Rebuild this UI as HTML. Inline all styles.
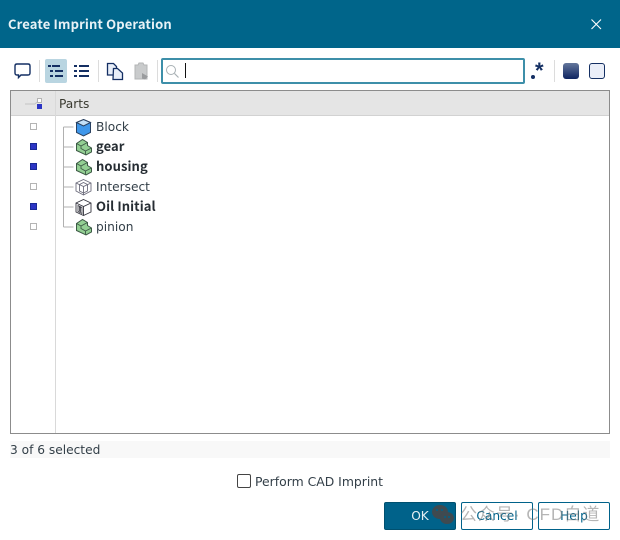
<!DOCTYPE html>
<html>
<head>
<meta charset="utf-8">
<style>
html,body{margin:0;padding:0;width:620px;height:540px;overflow:hidden;background:#fff;font-family:"DejaVu Sans","Liberation Sans",sans-serif;font-size:12.2px;color:#333f48}
.a{position:absolute}
.t{white-space:nowrap;line-height:16px}
.sq{position:absolute;left:30px;width:5px;height:5px;border:1px solid #b4b4b4;background:#fff}
.sq.on{background:#2c35c4;border-color:#1a2a96}
.row{position:absolute;left:96px;white-space:nowrap;line-height:16px;height:16px}
.b{font-family:"Noto Sans CJK SC","DejaVu Sans",sans-serif;font-weight:bold;font-size:13px;color:#262d33;margin-top:-1px;letter-spacing:.08px}
.btn{position:absolute;top:502px;height:28px;box-sizing:border-box;border:1px solid #00628a;border-radius:2px;text-align:center;line-height:27px;color:#00628a;background:#fff;font-size:12.2px}
</style>
</head>
<body>
<div class="a" style="left:0;top:0;width:620px;height:48px;background:#00658a"></div>
<div class="a t" style="left:8px;top:16px;color:#e8f2f6;font-family:'Noto Sans CJK SC','DejaVu Sans',sans-serif;font-weight:bold;font-size:13px;letter-spacing:.13px">Create Imprint Operation</div>
<svg class="a" style="left:590px;top:18px" width="13" height="13"><path d="M1.5 1.5L11 11M11 1.5L1.5 11" stroke="#fff" stroke-width="1.1" fill="none"/></svg>

<!-- toolbar -->
<svg class="a" style="left:0;top:50px" width="162" height="42" fill="none">
<path d="M17 14h11q2 0 2 2v7q0 2-2 2h-7l-2.5 2.5v-2.500h-1.500q-2 0-2-2v-7q0-2 2-2z" fill="#fff" stroke="#142f63" stroke-width="1.400"/>
<line x1="39.500" y1="10" x2="39.500" y2="32" stroke="#dcdcdc"/>
<rect x="45" y="9" width="22" height="24" rx="2" fill="#b9d5e1"/>
<g fill="#142f63"><rect x="48" y="15" width="3" height="2"/><rect x="52" y="15" width="8" height="2"/><rect x="50" y="20" width="3" height="2"/><rect x="55" y="20" width="8" height="2"/><rect x="50" y="25" width="3" height="2"/><rect x="55" y="25" width="8" height="2"/>
<rect x="74" y="15" width="3" height="2"/><rect x="79" y="15" width="10" height="2"/><rect x="74" y="20" width="3" height="2"/><rect x="79" y="20" width="10" height="2"/><rect x="74" y="25" width="3" height="2"/><rect x="79" y="25" width="10" height="2"/></g>
<line x1="98.500" y1="10" x2="98.500" y2="32" stroke="#dcdcdc"/>
<path d="M107.500 13.500h6l3 3v8.500h-9z" fill="#e8eef8" stroke="#142f63" stroke-width="1.300"/>
<path d="M113.500 18.500h4l5 4.500v6.500h-9.500z" fill="#e8eef8" stroke="#142f63" stroke-width="1.300"/>
<path d="M135 15h3l1-2h4l1 2h3v14h-12z" fill="#c9cbcc" stroke="#b3b5b6"/>
<path d="M142 23l6 3.500-3 3-3-1z" fill="#9a9c9e"/>
<line x1="157.500" y1="10" x2="157.500" y2="32" stroke="#dcdcdc"/>
</svg>

<div class="a" style="left:161px;top:58px;width:364px;height:26px;box-sizing:border-box;border:2px solid #3d8fa9;border-radius:2px;background:#fff"></div>
<svg class="a" style="left:164px;top:63px" width="16" height="16" fill="none"><circle cx="7" cy="7" r="4.500" stroke="#a8b0b4"/><path d="M10.500 10.500l4 4" stroke="#a8b0b4" stroke-width="1.200"/></svg>
<div class="a" style="left:185px;top:63px;width:1px;height:15px;background:#111"></div>
<div class="a" style="left:531px;top:75px;width:4px;height:4px;border-radius:50%;background:#142f63"></div>
<div class="a t" style="left:535px;top:63px;font-size:22px;color:#142f63;font-family:'Liberation Sans',sans-serif;font-weight:bold">*</div>
<div class="a" style="left:554px;top:60px;width:1px;height:22px;background:#dcdcdc"></div>
<div class="a" style="left:563px;top:63px;width:16px;height:16px;border-radius:3px;background:linear-gradient(#64779c,#0e2460)"></div>
<div class="a" style="left:589px;top:63px;width:14px;height:14px;border:1px solid #142f63;border-radius:3px;background:#eaeef8"></div>

<!-- table -->
<div class="a" style="left:10px;top:90px;width:600px;height:344px;box-sizing:border-box;border:1px solid #8c8c8c;background:#fff"></div>
<div class="a" style="left:11px;top:91px;width:598px;height:24px;background:#e5e5e5;border-bottom:1px solid #d2d2d2"></div>
<div class="a" style="left:55px;top:91px;width:1px;height:342px;background:#d9d9d9"></div>
<div class="a t" style="left:59px;top:96px;color:#3a3a30">Parts</div>
<svg class="a" style="left:24px;top:97px" width="20" height="14"><path d="M1 7h10" stroke="#c4c4c4"/><path d="M11 7l2-2" stroke="#c4c4c4"/><rect x="13.500" y="1.500" width="4" height="4" fill="#fff" stroke="#b4b4b4"/><rect x="13" y="7" width="5" height="5" fill="#2c35c4"/></svg>

<div class="sq" style="top:123px"></div>
<div class="sq on" style="top:143px"></div>
<div class="sq on" style="top:163px"></div>
<div class="sq" style="top:183px"></div>
<div class="sq on" style="top:203px"></div>
<div class="sq" style="top:223px"></div>

<svg class="a" style="left:60px;top:118px" width="36" height="120" fill="none">
<path d="M3.500 9v100M3.500 9h10M3.500 29h10M3.500 49h10M3.500 69h10M3.500 89h10M3.500 109h10" stroke="#b0b0b0"/>
<!-- block -->
<path d="M23.500 1.500l7 3v10l-7 3.500-7-3.500v-10z" fill="#3f97ea" stroke="#2a4160"/>
<path d="M16.500 4.500l7 3.500 7-3.500-7-3z" fill="#c3e0f7" stroke="#2a4160"/>
<!-- steps: gear, housing, pinion -->
<g>
<path d="M16.500 25.500l6-4 5 3v3l4 2.500v4l-5.500 3-9.500-4.500z" fill="#93cf93" stroke="#3d5a46"/>
<path d="M16.500 25.500l4.500 2.500v2.500l4.500 2.500v3.500M21 28l6.500-3.500M25.500 33l6-3" stroke="#3d5a46" stroke-width=".9"/>
</g>
<g transform="translate(0 20)">
<path d="M16.500 25.500l6-4 5 3v3l4 2.500v4l-5.500 3-9.500-4.500z" fill="#93cf93" stroke="#3d5a46"/>
<path d="M16.500 25.500l4.500 2.500v2.500l4.500 2.500v3.500M21 28l6.500-3.500M25.500 33l6-3" stroke="#3d5a46" stroke-width=".9"/>
</g>
<g transform="translate(0 80)">
<path d="M16.500 25.500l6-4 5 3v3l4 2.500v4l-5.500 3-9.500-4.500z" fill="#93cf93" stroke="#3d5a46"/>
<path d="M16.500 25.500l4.500 2.500v2.500l4.500 2.500v3.500M21 28l6.500-3.500M25.500 33l6-3" stroke="#3d5a46" stroke-width=".9"/>
</g>
<!-- intersect -->
<path d="M23.500 61.500l7.500 3.500v8l-7.500 4-7.500-4v-8zM16 65l7.500 3.500 7.500-3.500M23.500 68.500v8.500M19.500 66.500v6.500l4 2 4-2v-6.500l-4-2z" stroke="#6c6c7c" stroke-width=".9"/>
<!-- oil -->
<path d="M23.500 81.500l7.500 3.500v9l-7.500 3.500-7.500-3.500v-9zM16 85l7.500 3.500 7.500-3.500M23.500 88.500v9" stroke="#34343e" stroke-width=".9"/>
<path d="M18 87.500v6l4 2v-6zM19.500 89v4l1 .5v-4z" stroke="#34343e" stroke-width=".8"/>
</svg>

<div class="row" style="top:119px">Block</div>
<div class="row b" style="top:139px">gear</div>
<div class="row b" style="top:159px">housing</div>
<div class="row" style="top:179px">Intersect</div>
<div class="row b" style="top:199px">Oil Initial</div>
<div class="row" style="top:219px">pinion</div>

<div class="a" style="left:10px;top:441px;width:600px;height:17px;background:#f8f8f8"></div>
<div class="a t" style="left:10px;top:442px">3 of 6 selected</div>

<div class="a" style="left:237px;top:474px;width:14px;height:14px;box-sizing:border-box;border:1px solid #444;border-radius:2px;background:#fff"></div>
<div class="a t" style="left:255px;top:474px;font-size:12.4px">Perform CAD Imprint</div>

<div class="btn" style="left:384px;width:72px;background:#00628a;color:#e6f0f4;border-color:#00506f">OK</div>
<div class="btn" style="left:461px;width:72px">Cancel</div>
<div class="btn" style="left:538px;width:72px">Help</div>

<svg class="a" style="left:431px;top:504px" width="24" height="22"><ellipse cx="9" cy="8" rx="8" ry="7" fill="#3f4a50"/><ellipse cx="16" cy="14" rx="7" ry="6" fill="#3f4a50"/><circle cx="6" cy="6" r="1" fill="#00628a"/><circle cx="11" cy="6" r="1" fill="#00628a"/><circle cx="14" cy="13" r="1" fill="#00628a"/><circle cx="18" cy="13" r="1" fill="#00628a"/></svg>
<div class="a t" style="left:460px;top:507px;font-family:'Liberation Sans','Noto Sans CJK SC',sans-serif;font-size:17px;color:rgba(120,120,120,.55);letter-spacing:1px">公众号· CFD白道</div>
</body>
</html>
